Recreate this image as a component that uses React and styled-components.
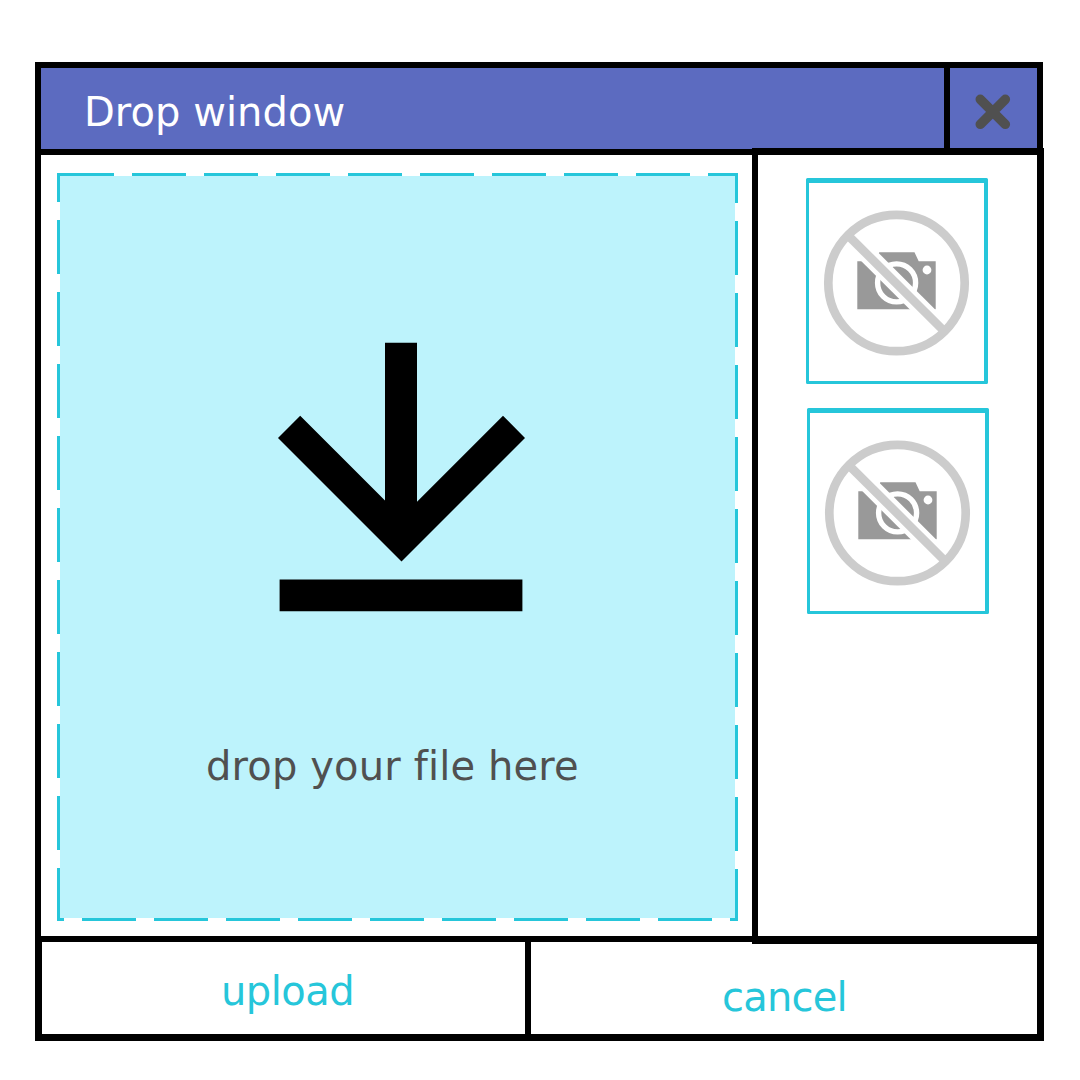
import React from "react";
import styled, { createGlobalStyle } from "styled-components";

const CYAN = "#26c6da";

const Global = createGlobalStyle`
  * { box-sizing: border-box; }
  body { margin: 0; background: #fff; font-family: "DejaVu Sans", Verdana, sans-serif; }
  button { font: inherit; padding: 0; border: 0; background: none; }
`;

const Page = styled.main`
  width: 1080px;
  height: 1080px;
  padding: 62px 36px 0 35px;
  overflow: hidden;
`;

const Header = styled.header`
  display: flex;
  width: 1008px;
  height: 87px;
  border: solid #000;
  border-width: 6px 6px 0;
  background: #5c6bc0;
`;

const Label = styled.span`
  display: block;
  font-size: 40px;
  line-height: 48px;
  white-space: pre;
  width: max-content;
  font-variant-ligatures: none;
  color: ${(p) => p.$color};
  letter-spacing: ${(p) => p.$spacing || 0}px;
`;

const Title = styled.div`
  flex: 1;
  padding: 20px 0 0 43px;
`;

const CloseButton = styled.button`
  display: flex;
  width: 93px;
  border-left: 6px solid #000;
  padding: 26px 0 0 25px;
`;

const Body = styled.section`
  display: flex;
  height: 793px;
`;

const DropPane = styled.div`
  width: 717px;
  border: solid #000;
  border-width: 6px 0 6px 6px;
  padding: 18px 14px 15px 16px;
`;

const dash = (dir, start) =>
  `repeating-linear-gradient(${dir}, ${CYAN} 0 ${start}px, #fff ${start}px ${start + 18}px, ${CYAN} ${start + 18}px 72px)`;

const DropZone = styled.div`
  width: 681px;
  height: 748px;
  padding: 3px;
  background:
    ${dash("to bottom", 29)} 0 0 / 3px 100% no-repeat,
    ${dash("to bottom", 30)} 100% 0 / 3px 100% no-repeat,
    ${dash("to right", 54)} 3px 0 / 678px 3px no-repeat,
    ${dash("to right", 7)} 0 100% / 100% 3px no-repeat;
`;

const DropFill = styled.div`
  height: 742px;
  padding: 166px 0 0 146px;
  background: #bdf3fc;
`;

const Caption = styled.div`
  margin-top: 130px;
  height: 50px;
`;

const Preview = styled.aside`
  display: flex;
  flex-direction: column;
  gap: 24px;
  width: 292px;
  height: 796px;
  margin-top: -1px;
  padding: 23px 0 0 48px;
  border: solid #000;
  border-width: 7px 7px 8px 6px;
`;

const Thumb = styled.div`
  width: 182px;
  height: 206px;
  flex: none;
  margin-left: ${(p) => p.$shift}px;
  border: solid ${CYAN};
  border-width: 5px 4px 3px 3px;
  border-radius: 1.5px;
`;

const Footer = styled.footer`
  display: flex;
  width: 1009px;
  height: 99px;
  border: solid #000;
  border-width: 0 7px 7px;
`;

const Action = styled.button`
  width: ${(p) => p.$width}px;
  height: 92px;
  padding: ${(p) => p.$pad};
  border-right: ${(p) => (p.$divider ? "6px solid #000" : "0")};
  text-align: left;
`;

const Glyph = styled.svg`
  display: block;
`;

const CloseIcon = () => (
  <Glyph width="36" height="36" viewBox="0 0 36 36">
    <path d="M5.3 5.3 30.3 30.3M30.3 5.3 5.3 30.3" stroke="#505050" strokeWidth="9.6" strokeLinecap="round" />
  </Glyph>
);

const DownloadIcon = () => (
  <Glyph width="380" height="270" viewBox="206 342 380 270">
    <path d="M385 342.7H417V501.700L503 415.700 525 438 401.500 561.500 278 438 300.200 415.700 385 500.500ZM279.600 579.600H522.400V611.200H279.600Z" />
  </Glyph>
);

const NoPhotoIcon = () => (
  <Glyph width="175" height="198" viewBox="809 183 175 198">
    <path d="M857.300 261.300H875L879.300 252.300H914.500L918.700 261.300H935.700V309.200H857.300Z" fill="#999" />
    <circle cx="896.600" cy="282.900" r="19" fill="none" stroke="#fff" strokeWidth="5.400" />
    <circle cx="927" cy="270" r="4.400" fill="#fff" />
    <path d="M851.500 238.700 941.600 328.500" stroke="#fff" strokeWidth="18" />
    <path d="M849.500 236.800 943.500 330.500" stroke="#ccc" strokeWidth="8.700" />
    <circle cx="896.500" cy="283" r="68.200" fill="none" stroke="#ccc" strokeWidth="8.700" />
  </Glyph>
);

export default function App() {
  return (
    <>
      <Global />
      <Page>
        <Header>
          <Title><Label $color="#fff" $spacing={0.05}>Drop window</Label></Title>
          <CloseButton aria-label="Close"><CloseIcon /></CloseButton>
        </Header>
        <Body>
          <DropPane>
            <DropZone>
              <DropFill>
                <DownloadIcon />
                <Caption><Label $color="#505050" $spacing={0.15}>drop your file here</Label></Caption>
              </DropFill>
            </DropZone>
          </DropPane>
          <Preview>
            <Thumb $shift={0}><NoPhotoIcon /></Thumb>
            <Thumb $shift={1}><NoPhotoIcon /></Thumb>
          </Preview>
        </Body>
        <Footer>
          <Action $width={489} $divider $pad="25px 0 19px 179px"><Label $color={CYAN} $spacing={-0.5}>upload</Label></Action>
          <Action $width={506} $pad="31px 0 13px 191px"><Label $color={CYAN} $spacing={-0.8}>cancel</Label></Action>
        </Footer>
      </Page>
    </>
  );
}
